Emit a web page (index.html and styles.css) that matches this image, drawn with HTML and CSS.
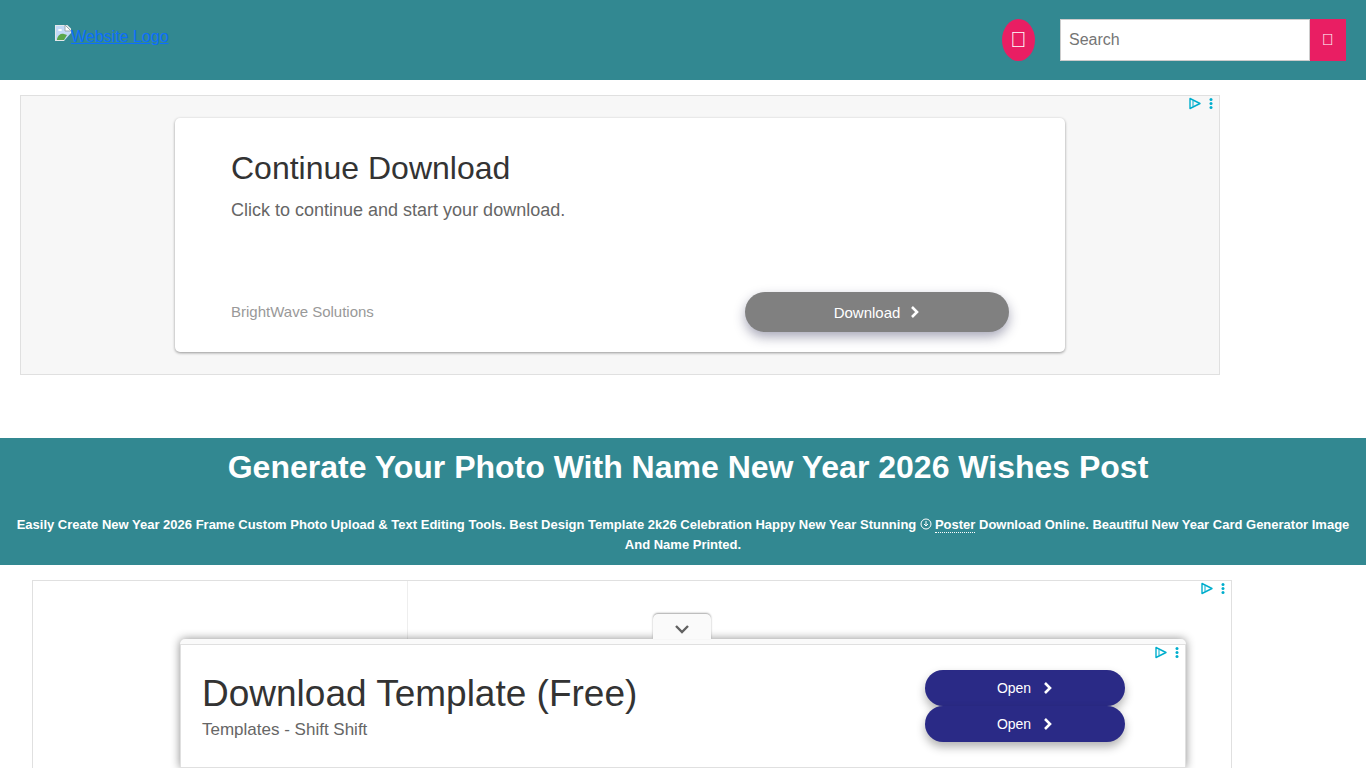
FILE: index.html
```html
<!DOCTYPE html>
<html lang="en">
<head>
  <meta charset="UTF-8">
  <meta name="viewport" content="width=device-width, initial-scale=1.0">
  <title>Generate Your Photo With Name New Year 2026 Wishes Post</title>
  <link rel="stylesheet" href="styles.css">
</head>
<body>
  <header class="site-header">
    <a class="site-logo" href="#">
      <svg class="logo-icon" viewBox="0 0 16 16" aria-hidden="true">
        <path d="M0 0h11l5 5v11H0z" fill="#c3d9f7"/>
        <path d="M0 0h11l5 5v11H0z" fill="none" stroke="#e4e8ea" stroke-width="2"/>
        <path d="M2 14c1-4 4-6 7-5l3 1-3 5H2z" fill="#5aa64a"/>
        <ellipse cx="5" cy="5" rx="2" ry="1" fill="#fff"/>
        <path d="M10 0v6h6z" fill="#fff" stroke="#9aa9ad" stroke-width="1"/>
        <path d="M16 8v8H9z" fill="#328891"/>
      </svg><span>Website Logo</span>
    </a>
    <div class="header-tools">
      <button class="round-button" type="button" aria-label="Account">&#xf007;</button>
      <form class="search-form">
        <input class="search-input" type="search" placeholder="Search" aria-label="Search">
        <button class="search-button" type="button" aria-label="Submit search">&#xf002;</button>
      </form>
    </div>
  </header>

  <main>
    <section class="ad ad-top">
      <div class="ad-choices">
        <svg class="ad-mark" viewBox="0 0 12 12"><path d="M1 1v10l10-5z"/><path class="ad-mark-inner" d="M4 3v6"/></svg>
        <svg class="ad-dots" viewBox="0 0 4 12"><circle cx="2" cy="2" r="1.5"/><circle cx="2" cy="6" r="1.5"/><circle cx="2" cy="10" r="1.5"/></svg>
      </div>
      <div class="ad-card">
        <h2 class="ad-title">Continue Download</h2>
        <p class="ad-text">Click to continue and start your download.</p>
        <div class="ad-footer">
          <span class="ad-brand">BrightWave Solutions</span>
          <button class="pill pill-gray" type="button">Download
            <svg class="chevron" viewBox="0 0 10 14"><path d="M2 2l5 5-5 5"/></svg>
          </button>
        </div>
      </div>
    </section>

    <section class="banner">
      <h1 class="banner-title">Generate Your Photo With Name New Year 2026 Wishes Post</h1>
      <h2 class="banner-text">Easily Create New Year 2026 Frame Custom Photo Upload &amp; Text Editing Tools. Best Design Template 2k26 Celebration Happy New Year Stunning
        <a class="banner-link" href="#"><svg class="link-icon" viewBox="0 0 12 12"><circle cx="6" cy="6" r="5"/><path d="M6 3v5M4 6l2 2 2-2"/></svg><span class="link-word">Poster</span></a>
        Download Online. Beautiful New Year Card Generator Image And Name Printed.</h2>
    </section>

    <section class="ad ad-lower">
      <div class="ad-column"></div>
      <div class="ad-choices">
        <svg class="ad-mark" viewBox="0 0 12 12"><path d="M1 1v10l10-5z"/><path class="ad-mark-inner" d="M4 3v6"/></svg>
        <svg class="ad-dots" viewBox="0 0 4 12"><circle cx="2" cy="2" r="1.5"/><circle cx="2" cy="6" r="1.5"/><circle cx="2" cy="10" r="1.5"/></svg>
      </div>
    </section>
  </main>

  <!-- anchor ad -->
  <aside class="anchor">
    <button class="anchor-toggle" type="button" aria-label="Collapse">
      <svg class="toggle-icon" viewBox="0 0 16 10"><path d="M2 2l6 6 6-6"/></svg>
    </button>
    <div class="anchor-body">
      <div class="ad-choices">
        <svg class="ad-mark" viewBox="0 0 12 12"><path d="M1 1v10l10-5z"/><path class="ad-mark-inner" d="M4 3v6"/></svg>
        <svg class="ad-dots" viewBox="0 0 4 12"><circle cx="2" cy="2" r="1.5"/><circle cx="2" cy="6" r="1.5"/><circle cx="2" cy="10" r="1.5"/></svg>
      </div>
      <div class="anchor-copy">
        <h2 class="anchor-title">Download Template (Free)</h2>
        <p class="anchor-text">Templates - Shift Shift</p>
      </div>
      <div class="anchor-buttons">
        <button class="pill pill-blue" type="button">Open
          <svg class="chevron" viewBox="0 0 10 14"><path d="M2 2l5 5-5 5"/></svg>
        </button>
        <button class="pill pill-blue" type="button">Open
          <svg class="chevron" viewBox="0 0 10 14"><path d="M2 2l5 5-5 5"/></svg>
        </button>
      </div>
    </div>
  </aside>
</body>
</html>
```
FILE: styles.css
```css
:root {
  --teal: #328891;
  --pink: #e91e63;
  --link: #0d6efd;
  --ad-border: #e0e0e0;
  --ad-icon: #00aecd;
}

* {
  box-sizing: border-box;
}

body {
  margin: 0;
  font-family: "Liberation Sans", Arial, sans-serif;
  font-size: 16px;
  line-height: 24px;
  background: #fff;
  color: #212529;
}

h1, h2, p {
  margin: 0;
}

button {
  font-family: inherit;
  border: none;
  cursor: pointer;
}

/* Header */
.site-header {
  display: flex;
  justify-content: space-between;
  align-items: center;
  height: 80px;
  padding: 0 20px 0 55px;
  background: var(--teal);
}

.site-logo {
  display: flex;
  margin-bottom: 6px;
  color: var(--link);
}

.logo-icon {
  width: 16px;
  height: 16px;
}

.header-tools {
  display: flex;
  gap: 25px;
}

.round-button {
  width: 33px;
  height: 42px;
  padding: 0;
  border-radius: 50%;
  background: var(--pink);
  color: #fff;
  font-size: 22px;
}

.search-form {
  display: flex;
}

.search-input {
  width: 250px;
  height: 42px;
  padding: 8px;
  border: 1px solid #ccc;
  border-radius: 0;
  font-family: inherit;
  font-size: 16px;
}

.search-button {
  width: 36px;
  padding: 0;
  background: var(--pink);
  color: #fff;
  font-size: 16px;
}

/* Ads */
.ad {
  position: relative;
  max-width: 1200px;
  height: 280px;
  border: 1px solid var(--ad-border);
}

.ad-top {
  margin: 15px 20px 63px;
  padding: 22px 16px;
  background: #f7f7f7;
}

.ad-lower {
  margin: 15px 32px;
}

.ad-column {
  width: 375px;
  height: 100%;
  border-right: 1px solid #eee;
}

.ad-choices {
  position: absolute;
  top: 1px;
  right: 6px;
  display: flex;
  gap: 8px;
}

.ad-mark {
  width: 12px;
  height: 13px;
  fill: none;
  stroke: var(--ad-icon);
  stroke-width: 1.4;
  stroke-linejoin: round;
}

.ad-mark-inner {
  stroke-width: 1;
}

.ad-dots {
  width: 4px;
  height: 13px;
  fill: var(--ad-icon);
}

.ad-card {
  display: flex;
  flex-direction: column;
  max-width: 890px;
  height: 234px;
  margin: 0 auto;
  padding: 30px 56px 20px;
  border-radius: 5px;
  background: #fff;
  box-shadow: 0 1px 3px rgba(0, 0, 0, 0.4);
}

.ad-title {
  font-size: 32px;
  font-weight: 400;
  line-height: 40px;
  color: #333;
}

.ad-text {
  margin-top: 10px;
  font-size: 18px;
  color: #666;
}

.ad-footer {
  display: flex;
  justify-content: space-between;
  align-items: center;
  margin-top: auto;
}

.ad-brand {
  font-size: 15px;
  color: #999;
}

.pill {
  display: flex;
  justify-content: center;
  align-items: center;
  gap: 10px;
  padding: 0;
  border-radius: 20px;
  color: #fff;
}

.pill-gray {
  width: 264px;
  height: 40px;
  background: #808080;
  font-size: 15px;
  box-shadow: 0 5px 12px rgba(40, 40, 80, 0.4);
}

.pill-blue {
  gap: 12px;
  width: 200px;
  height: 36px;
  background: #2a2a86;
  font-size: 14px;
  box-shadow: 0 5px 10px rgba(0, 0, 0, 0.3);
}

.chevron {
  width: 10px;
  height: 14px;
  fill: none;
  stroke: #fff;
  stroke-width: 2.6;
}

/* Banner */
.banner {
  padding: 10px;
  background: var(--teal);
  color: #fff;
  text-align: center;
}

.banner-title {
  margin-bottom: 29px;
  padding-left: 10px;
  font-size: 32px;
  line-height: 38px;
}

.banner-text {
  font-size: 13px;
  line-height: 20px;
}

.banner-link {
  color: #fff;
  text-decoration: none;
}

.link-icon {
  width: 12px;
  height: 12px;
  margin-right: 3px;
  vertical-align: -1px;
  fill: none;
  stroke: #fff;
  stroke-width: 1;
}

.link-word {
  border-bottom: 1px dotted #fff;
}

/* Anchor ad */
.anchor {
  position: fixed;
  right: 0;
  bottom: 0;
  left: 0;
  width: 1006px;
  max-width: 100%;
  margin: 0 auto;
  padding-top: 5px;
  border-radius: 5px 5px 0 0;
  background: #fafafa;
  box-shadow: 0 0 10px rgba(0, 0, 0, 0.45);
}

.anchor-toggle {
  position: absolute;
  bottom: 100%;
  left: 50%;
  width: 58px;
  height: 25px;
  margin-left: -30px;
  padding: 5px 0 0;
  border-radius: 5px 5px 0 0;
  background: #fafafa;
  box-shadow: 0 -1px 2px rgba(0, 0, 0, 0.35);
}

.toggle-icon {
  width: 16px;
  height: 10px;
  fill: none;
  stroke: #616161;
  stroke-width: 2.4;
}

.anchor-body {
  position: relative;
  display: flex;
  justify-content: space-between;
  align-items: center;
  height: 124px;
  padding: 0 60px 0 21px;
  border: 1px solid var(--ad-border);
  background: #fff;
}

.anchor-title {
  font-size: 37px;
  font-weight: 400;
  line-height: 48px;
  color: #333;
}

.anchor-text {
  font-size: 17px;
  color: #666;
}
```
